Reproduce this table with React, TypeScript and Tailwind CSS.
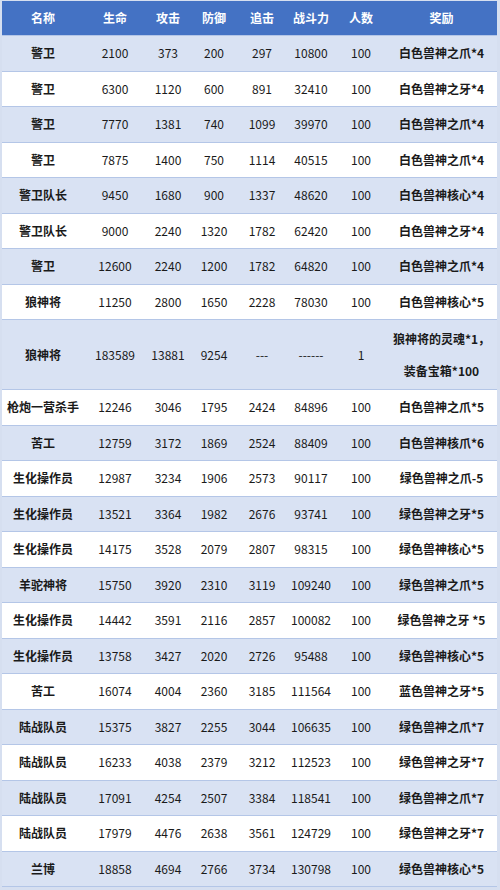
const rows: string[][] = [
  ['警卫', '2100', '373', '200', '297', '10800', '100', '白色兽神之爪*4'],
  ['警卫', '6300', '1120', '600', '891', '32410', '100', '白色兽神之牙*4'],
  ['警卫', '7770', '1381', '740', '1099', '39970', '100', '白色兽神之爪*4'],
  ['警卫', '7875', '1400', '750', '1114', '40515', '100', '白色兽神之爪*4'],
  ['警卫队长', '9450', '1680', '900', '1337', '48620', '100', '白色兽神核心*4'],
  ['警卫队长', '9000', '2240', '1320', '1782', '62420', '100', '白色兽神之牙*4'],
  ['警卫', '12600', '2240', '1200', '1782', '64820', '100', '白色兽神之爪*4'],
  ['狼神将', '11250', '2800', '1650', '2228', '78030', '100', '白色兽神核心*5'],
  ['狼神将', '183589', '13881', '9254', '---', '------', '1', 'BOSS'],
  ['枪炮一营杀手', '12246', '3046', '1795', '2424', '84896', '100', '白色兽神之爪*5'],
  ['苦工', '12759', '3172', '1869', '2524', '88409', '100', '白色兽神核爪*6'],
  ['生化操作员', '12987', '3234', '1906', '2573', '90117', '100', '绿色兽神之爪-5'],
  ['生化操作员', '13521', '3364', '1982', '2676', '93741', '100', '绿色兽神之牙*5'],
  ['生化操作员', '14175', '3528', '2079', '2807', '98315', '100', '绿色兽神核心*5'],
  ['羊驼神将', '15750', '3920', '2310', '3119', '109240', '100', '绿色兽神之爪*5'],
  ['生化操作员', '14442', '3591', '2116', '2857', '100082', '100', '绿色兽神之牙 *5'],
  ['生化操作员', '13758', '3427', '2020', '2726', '95488', '100', '绿色兽神核心*5'],
  ['苦工', '16074', '4004', '2360', '3185', '111564', '100', '蓝色兽神之牙*5'],
  ['陆战队员', '15375', '3827', '2255', '3044', '106635', '100', '绿色兽神之爪*7'],
  ['陆战队员', '16233', '4038', '2379', '3212', '112523', '100', '绿色兽神之牙*7'],
  ['陆战队员', '17091', '4254', '2507', '3384', '118541', '100', '绿色兽神之爪*7'],
  ['陆战队员', '17979', '4476', '2638', '3561', '124729', '100', '绿色兽神之牙*7'],
  ['兰博', '18858', '4694', '2766', '3734', '130798', '100', '绿色兽神核心*5'],
];

const headers = ['名称', '生命', '攻击', '防御', '追击', '战斗力', '人数', '奖励'];

const cols = 'grid grid-cols-[82px_62px_44px_48px_48px_50px_50px_1fr]';

export default function App() {
  return (
    <div
      className="w-[500px] h-[890px] overflow-hidden bg-[#d6dff0] pt-[1px] pl-[2px] pr-[3px] text-[12px] text-[#1a1a1a]"
      style={{ fontFamily: '"Noto Sans CJK SC", "Noto Sans", sans-serif' }}
    >
      <div className={`${cols} h-[35px] bg-[#4472c4] text-white font-bold items-center text-center border-b border-[#b4c6e7]`}>
        {headers.map((h) => (
          <div key={h}>{h}</div>
        ))}
      </div>
      {rows.map((r, i) => {
        const big = r[7] === 'BOSS';
        return (
          <div
            key={i}
            className={`${cols} items-center text-center border-b border-[#b4c6e7] ${
              i % 2 === 0 ? 'bg-[#d9e2f3]' : 'bg-white'
            } ${big ? 'h-[70px]' : 'h-[35.5px]'}`}
          >
            <div className="font-bold whitespace-nowrap">{r[0]}</div>
            {r.slice(1, 7).map((v, j) => (
              <div key={j}>{v}</div>
            ))}
            {big ? (
              <div className="font-bold leading-[32px]">
                <div>狼神将的灵魂*1，</div>
                <div>装备宝箱*100</div>
              </div>
            ) : (
              <div className="font-bold whitespace-pre">{r[7]}</div>
            )}
          </div>
        );
      })}
    </div>
  );
}
